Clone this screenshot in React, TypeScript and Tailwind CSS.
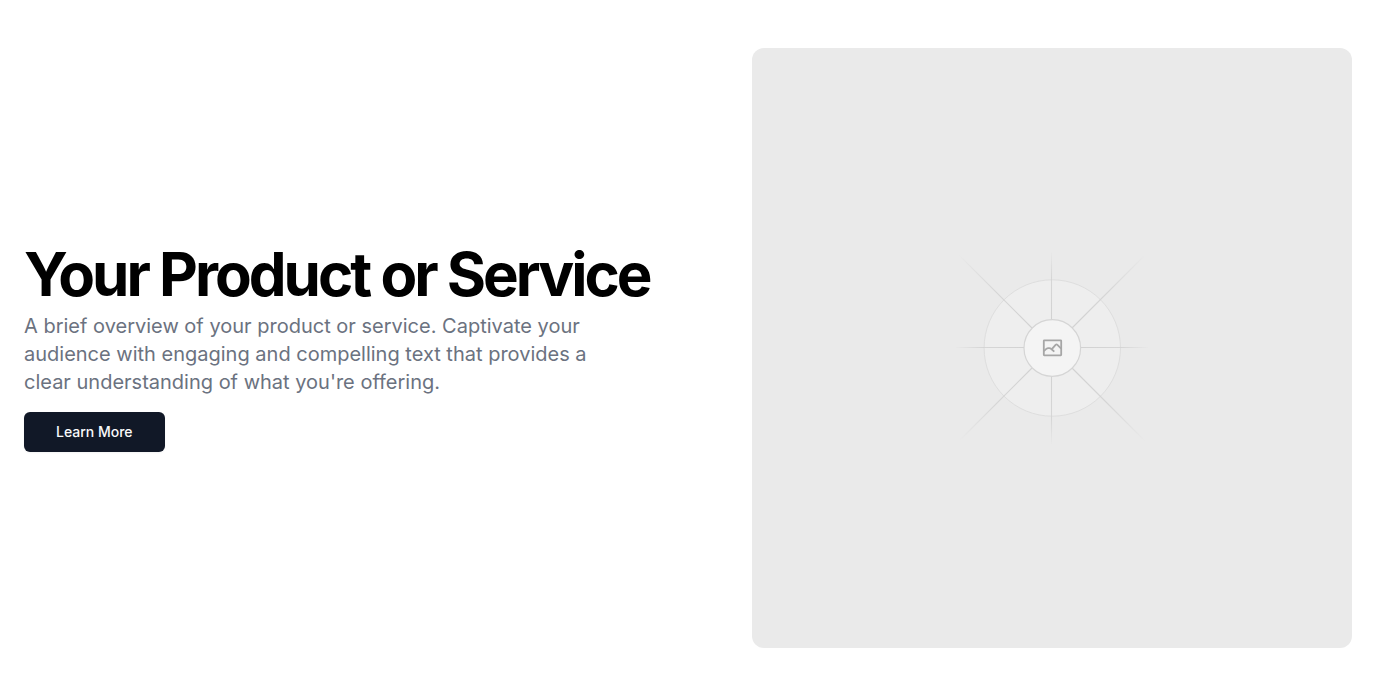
const rays = [
  "M99.5 4V72",
  "M99.5 128V196",
  "M4 99.5H72",
  "M128 99.5H196",
  "M6 6L80 80",
  "M194 6L120 80",
  "M6 194L80 120",
  "M194 194L120 120",
];

function Placeholder() {
  return (
    <div className="flex aspect-square w-full items-center justify-center overflow-hidden rounded-xl bg-[#eaeaea]">
      <svg className="w-1/3" viewBox="0 0 200 200" fill="none" role="img" aria-label="Product image">
        <defs>
          <radialGradient id="fade-straight" gradientUnits="userSpaceOnUse" cx="100" cy="100" r="98">
            <stop offset="0.3" stopColor="#d2d2d2" />
            <stop offset="0.72" stopColor="#d2d2d2" stopOpacity="0.85" />
            <stop offset="1" stopColor="#d2d2d2" stopOpacity="0" />
          </radialGradient>
          <radialGradient id="fade-diagonal" gradientUnits="userSpaceOnUse" cx="100" cy="100" r="132">
            <stop offset="0.3" stopColor="#d2d2d2" />
            <stop offset="0.6" stopColor="#d2d2d2" stopOpacity="0.85" />
            <stop offset="1" stopColor="#d2d2d2" stopOpacity="0" />
          </radialGradient>
        </defs>
        <circle cx="100.3" cy="100" r="68.2" fill="#eeeeee" stroke="#dedede" />
        {rays.map((d) => (
          <path key={d} d={d} stroke={d.includes("L") ? "url(#fade-diagonal)" : "url(#fade-straight)"} strokeWidth="1.1" />
        ))}
        <circle cx="100.3" cy="100" r="28.3" fill="#f4f4f4" stroke="#d5d5d5" strokeWidth="1.2" />
        <g stroke="#a6a6a6" strokeWidth="1.8" strokeLinejoin="round">
          <rect x="91.8" y="92.3" width="17.4" height="15" rx="0.5" />
          <path d="M91.8 103.2L94.3 100.9Q95.2 100.2 96.3 100.2H97.3Q98.4 100.2 99.3 101L102.3 103.7" />
          <path d="M99.8 101.200L103.6 96.8Q104.5 95.9 105.4 96.8L109.2 100.7" />
        </g>
      </svg>
    </div>
  );
}

export default function App() {
  return (
    <main className="min-h-screen bg-white py-12 font-['Inter',sans-serif]">
      <section className="grid items-center gap-12 px-6 lg:grid-cols-[1fr_600px]">
        <div className="flex flex-col items-start gap-4">
          <div className="flex flex-col gap-2">
            <h1 className="text-6xl leading-none font-bold tracking-tighter text-black">Your Product or Service</h1>
            <p className="max-w-[600px] text-xl leading-7 text-[#6b7280]">
              A brief overview of your product or service. Captivate your audience with engaging and compelling text that
              provides a clear understanding of what you're offering.
            </p>
          </div>
          <button className="h-10 rounded-md bg-[#111827] px-8 text-sm font-medium text-gray-50 shadow-xs">
            Learn More
          </button>
        </div>
        <Placeholder />
      </section>
    </main>
  );
}
